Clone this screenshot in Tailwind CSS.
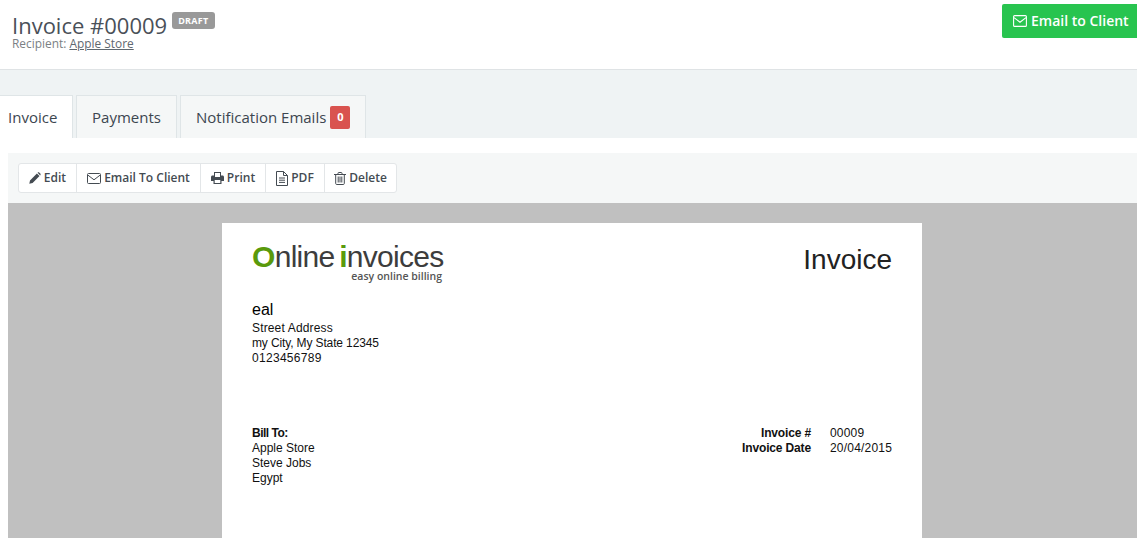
<!DOCTYPE html>
<html lang="en">

<head>
    <meta charset="UTF-8">
    <meta name="viewport" content="width=device-width, initial-scale=1.0">
    <title>Invoice #00009</title>
    <script src="https://cdn.jsdelivr.net/npm/@tailwindcss/browser@4"></script>
</head>

<body class="bg-white h-[538px] overflow-hidden font-['Open_Sans',sans-serif] text-[#3c4650]">

    <!-- page header -->
    <header class="h-[70px] border-b border-[#dfe3e5] flex justify-between items-start">
        <div class="pl-3 pt-[11px]">
            <div class="flex items-start">
                <h1 class="text-[22px] leading-[28px] text-[#4a5058]">Invoice #00009</h1>
                <span class="ml-[5px] mt-px h-[17px] px-[6px] rounded-[3px] bg-[#999] text-white text-[9px] font-bold leading-[17px] tracking-[0.3px]">DRAFT</span>
            </div>
            <p class="text-[11.9px] leading-[13px] -mt-[2px] text-[#7b7f84]">Recipient: <a href="#" class="underline text-[#5f6870]">Apple Store</a></p>
        </div>
        <button class="mt-1 w-[135px] h-[34px] bg-[#28c44f] rounded-l-[2px] text-white text-sm font-semibold flex items-center pl-[11px] gap-1">
            <svg class="w-[14px] h-[12px]" viewBox="0 0 14 12" fill="none" stroke="currentColor" stroke-width="1.1"><rect x="0.6" y="0.6" width="12.8" height="10.8" rx="1"/><path d="M1 2.6 L7 7.2 L13 2.6"/></svg>
            Email to Client
        </button>
    </header>

    <!-- tabs -->
    <nav class="h-[68px] bg-[#eff3f4] flex items-end gap-[3px] text-[15px]">
        <a class="h-[43px] w-[73px] bg-white border border-b-0 border-l-0 border-[#dfe5e7] pl-2 leading-[43px]">Invoice</a>
        <a class="h-[43px] w-[101px] bg-[#f5f7f7] border border-b-0 border-[#dfe5e7] text-center leading-[43px]">Payments</a>
        <a class="h-[43px] w-[186px] bg-[#f5f7f7] border border-b-0 border-[#dfe5e7] pl-[15px] flex items-center gap-1">
            Notification Emails
            <span class="w-5 h-[23px] rounded-[2px] bg-[#d9534f] text-white text-[11px] font-bold flex items-center justify-center">0</span>
        </a>
    </nav>

    <main class="pl-2 pt-[15px]">
        <!-- toolbar -->
        <div class="h-[50px] bg-[#f5f7f7] pl-[10px] flex items-center">
            <div class="flex h-[30px] bg-white border border-[#e3e6e8] rounded-[3px] text-xs font-semibold text-[#444b52]">
                <a class="w-[58px] flex items-center justify-center gap-[3px] border-r border-[#e3e6e8]">
                    <svg class="w-3 h-3" viewBox="0 0 12 12" fill="currentColor"><path d="M0.3 11.7 L1 8.4 L7.9 1.5 L10.5 4.1 L3.6 11 Z M8.6 0.8 C9.2 0.2 9.9 0.2 10.4 0.7 L11.3 1.6 C11.8 2.1 11.8 2.8 11.2 3.4 Z"/></svg>
                    Edit
                </a>
                <a class="w-[124px] flex items-center justify-center gap-[3px] border-r border-[#e3e6e8]">
                    <svg class="w-[14px] h-[11px]" viewBox="0 0 14 11" fill="none" stroke="currentColor"><rect x="0.5" y="0.5" width="13" height="10" rx="1"/><path d="M1 2.2 L7 6.8 L13 2.2"/></svg>
                    Email To Client
                </a>
                <a class="w-[65px] flex items-center justify-center gap-[3px] border-r border-[#e3e6e8]">
                    <svg class="w-[13px] h-3" viewBox="0 0 13 12" fill="currentColor"><path d="M3 0 H10 V3.5 H11.5 C12.3 3.5 13 4.2 13 5 V9 H10.5 V12 H2.5 V9 H0 V5 C0 4.2 0.7 3.5 1.5 3.5 H3 Z M4 1 V5 H9 V1 Z M3.7 8 V10.9 H9.3 V8 Z"/></svg>
                    Print
                </a>
                <a class="w-[59px] flex items-center justify-center gap-[3px] border-r border-[#e3e6e8]">
                    <svg class="w-3 h-[15px]" viewBox="0 0 12 15" fill="none" stroke="currentColor"><path d="M0.5 0.5 H7.5 L11.5 4.5 V14.5 H0.5 Z M7.5 0.5 V4.5 H11.5 M3 7 H9 M3 9.2 H9 M3 11.4 H9"/></svg>
                    PDF
                </a>
                <a class="w-[71px] flex items-center justify-center gap-[3px]">
                    <svg class="w-3 h-[13px]" viewBox="0 0 12 13" fill="none" stroke="currentColor"><path d="M0 2.5 H12 M4 2.5 V1.2 C4 0.8 4.3 0.5 4.7 0.5 H7.3 C7.7 0.5 8 0.8 8 1.2 V2.5 M1.7 2.5 V11.5 C1.7 12.1 2.1 12.5 2.7 12.5 H9.3 C9.9 12.5 10.3 12.1 10.3 11.5 V2.5 M4.2 4.5 V10.5 M6 4.5 V10.5 M7.8 4.5 V10.5"/></svg>
                    Delete
                </a>
            </div>
        </div>

        <!-- invoice preview -->
        <div class="bg-[#c0c0c0] h-[335px] pt-5 pl-[214px]">
            <div class="w-[700px] h-[315px] bg-white px-[30px] pt-[17px] font-['Liberation_Sans',sans-serif] text-xs leading-[15px] text-[#111]">
                <div class="flex justify-between items-start">
                    <div class="h-[46px] w-[193px]">
                        <div class="text-[30px] leading-[34px] tracking-[-0.7px] [word-spacing:-3px] text-[#3d3d3d] whitespace-nowrap"><span class="font-bold text-[#5a9a0c]">O</span>nline <span class="font-bold text-[#5a9a0c]">i</span>nvoices</div>
                        <div class="text-right pr-[3px] -mt-[4px] font-['Open_Sans',sans-serif] text-[10.5px] leading-[12px] font-semibold text-[#555]">easy online billing</div>
                    </div>
                    <div class="text-[28px] leading-[40px] text-[#222]">Invoice</div>
                </div>

                <div class="mt-[13px]">
                    <div class="text-base leading-[22px] text-black">eal</div>
                    <p class="tracking-[0.15px]">Street Address</p>
                    <p class="tracking-[-0.13px]">my City, My State 12345</p>
                    <p class="tracking-[0.3px]">0123456789</p>
                </div>

                <div class="mt-[60px] flex justify-between">
                    <div>
                        <p class="font-bold tracking-[-0.5px]">Bill To:</p>
                        <p>Apple Store</p>
                        <p>Steve Jobs</p>
                        <p>Egypt</p>
                    </div>
                    <div class="grid grid-cols-[auto_62px] gap-x-[19px] h-[30px]">
                        <span class="font-bold text-right tracking-[-0.15px]">Invoice #</span>
                        <span class="tracking-[0.2px]">00009</span>
                        <span class="font-bold text-right tracking-[-0.15px]">Invoice Date</span>
                        <span class="tracking-[0.2px]">20/04/2015</span>
                    </div>
                </div>
            </div>
        </div>
    </main>

</body>

</html>
